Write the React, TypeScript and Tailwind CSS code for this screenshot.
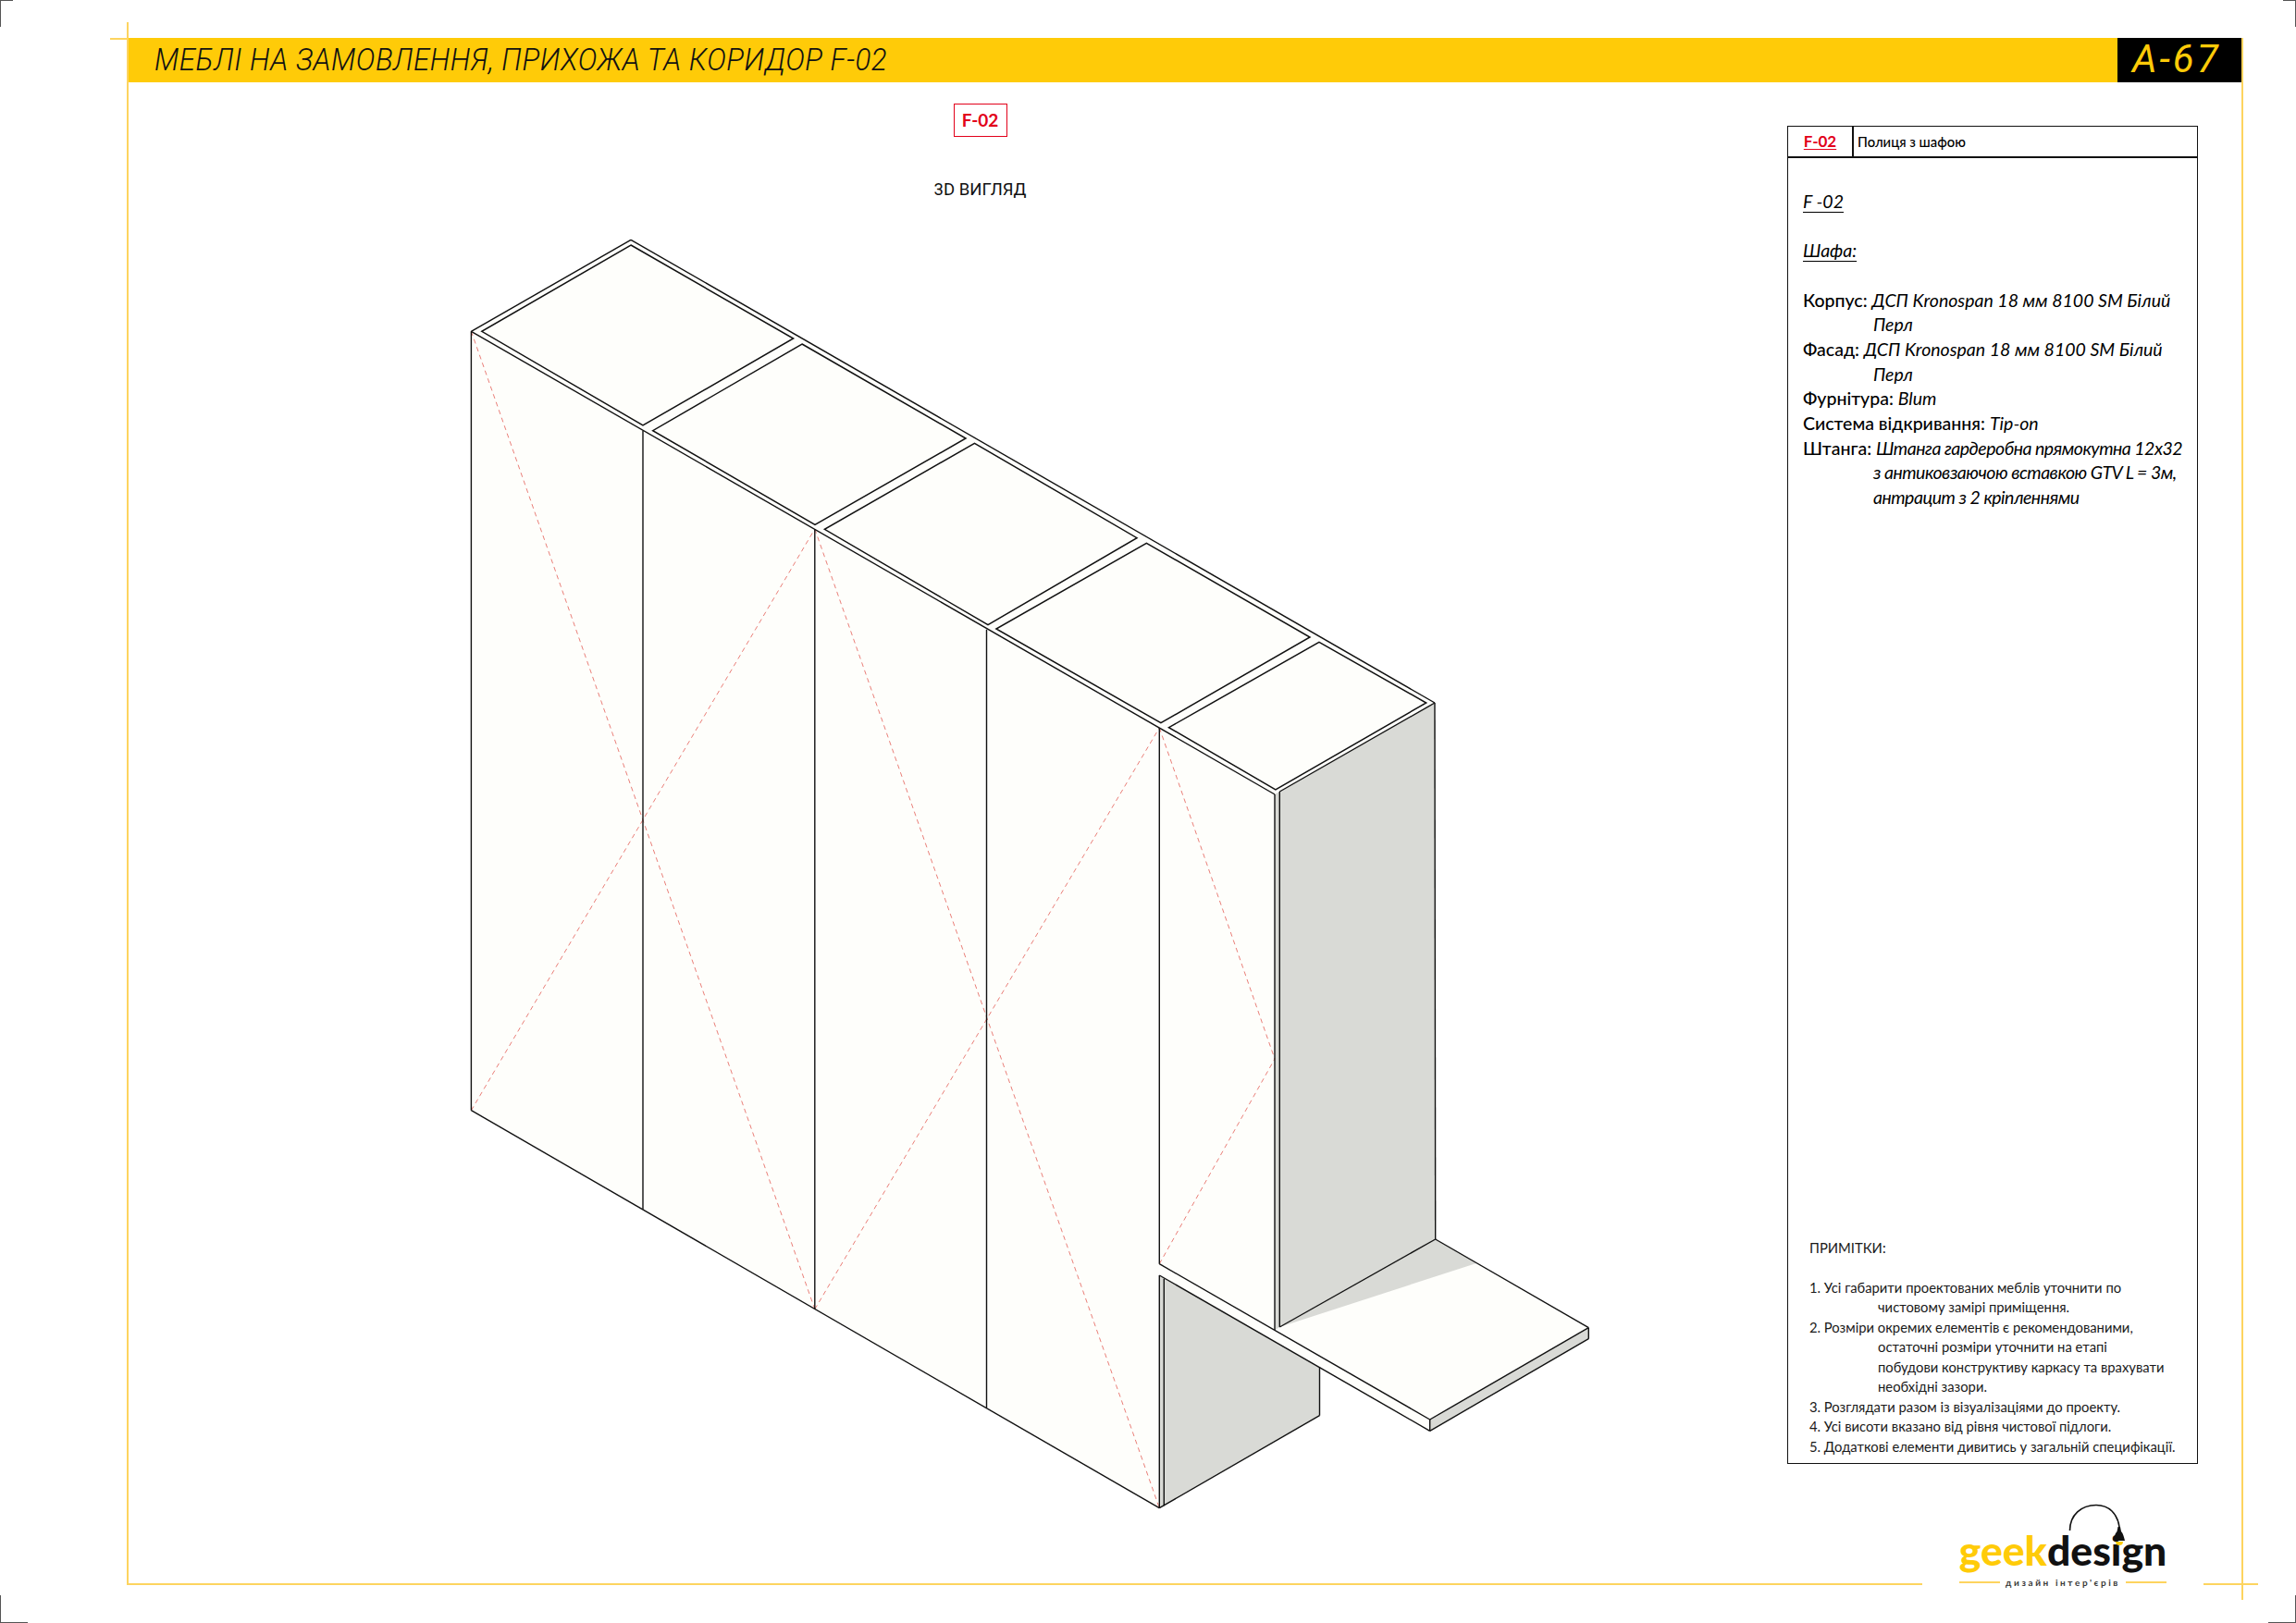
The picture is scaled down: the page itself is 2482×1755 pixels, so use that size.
const FUTURA = "font-['Lato','Noto_Sans',sans-serif]";

type P = [number, number];
const pts = (a: P[]) => a.map((p) => p.join(",")).join(" ");

const WHITE = "#fefefb";
const GREY = "#d9dad6";

const fills: { p: P[]; c: string }[] = [
  { p: [[682, 259.3], [1551, 760], [1378, 859], [509.4, 358.3]], c: WHITE },
  { p: [[509.4, 358.3], [1378, 859], [1378, 1438.3], [1253.3, 1366.7], [1253.3, 1630.7], [509.4, 1200.7]], c: WHITE },
  { p: [[1383.3, 856], [1551, 760], [1551.7, 1340], [1383.3, 1435]], c: GREY },
  { p: [[1378, 859], [1383.3, 856], [1383.3, 1435], [1378, 1438.3]], c: GREY },
  { p: [[1253.3, 1379], [1426.5, 1478.5], [1426.5, 1530.7], [1253.3, 1630.7]], c: GREY },
  { p: [[1379, 1438.3], [1551.7, 1340], [1717.3, 1435.7], [1545.7, 1535]], c: WHITE },
  { p: [[1383.3, 1435], [1551.7, 1340], [1596, 1366]], c: GREY },
  { p: [[1253.3, 1366.7], [1545.7, 1535], [1545.7, 1547.3], [1253.3, 1379]], c: WHITE },
  { p: [[1545.7, 1535], [1717.3, 1435.7], [1717.3, 1447.7], [1545.7, 1547.3]], c: GREY },
];

const topPanels: P[][] = [
  [[682, 265], [857.6, 366], [695, 460], [520.8, 358.3]],
  [[867, 372], [1044, 474], [881, 567.3], [705.7, 465.7]],
  [[1053.5, 479.3], [1229, 581.7], [1068, 675.7], [891.4, 572.3]],
  [[1239.4, 587.3], [1416, 689], [1254.9, 781.7], [1076.9, 680]],
  [[1426, 694.3], [1541.7, 760], [1378.9, 854], [1263.5, 786.7]],
];

const lines: [number, number, number, number][] = [
  [682, 259.3, 509.4, 358.3],
  [682, 259.3, 1551, 760],
  [509.4, 358.3, 1378, 859],
  [1551, 760, 1383.3, 856],
  [509.4, 358.3, 509.4, 1200.7],
  [695, 465.7, 695, 1307.7],
  [880.8, 572, 880.8, 1415.7],
  [1066.5, 680.7, 1066.5, 1522],
  [1253.3, 787, 1253.3, 1366.7],
  [1253.3, 1379, 1253.3, 1630.7],
  [1258.3, 1382.7, 1258.3, 1628.3],
  [509.4, 1200.7, 1253.3, 1630.7],
  [1253.3, 1630.7, 1426.5, 1530.7],
  [1426.5, 1478.5, 1426.5, 1530.7],
  [1378, 859, 1378, 1438.3],
  [1383.3, 856, 1383.3, 1435],
  [1551, 760, 1551.7, 1340],
  [1551.7, 1340, 1383.3, 1435],
  [1551.7, 1340, 1717.3, 1435.7],
  [1717.3, 1435.7, 1545.7, 1535],
  [1717.3, 1435.7, 1717.3, 1447.7],
  [1717.3, 1447.7, 1545.7, 1547.3],
  [1545.7, 1535, 1545.7, 1547.3],
  [1253.3, 1366.7, 1545.7, 1535],
  [1253.3, 1379, 1545.7, 1547.3],
];

const dashes: [number, number, number, number][] = [
  [509.4, 358.3, 880.8, 1415.7],
  [509.4, 1200.7, 880.8, 572],
  [880.8, 572, 1253.3, 1630.7],
  [880.8, 1415.7, 1253.3, 787],
  [1253.3, 787, 1378, 1145],
  [1253.3, 1366.7, 1378, 1145],
];

function Drawing() {
  return (
    <svg viewBox="500 250 1230 1390" className="block w-[1230px] h-[1390px] self-start ml-[313px] mt-[33px]" fill="none">
      {fills.map((f, i) => (
        <polygon key={i} points={pts(f.p)} fill={f.c} />
      ))}
      {dashes.map((d, i) => (
        <line key={i} x1={d[0]} y1={d[1]} x2={d[2]} y2={d[3]} stroke="#ea7f78" strokeWidth={1} strokeDasharray="5 4" />
      ))}
      {topPanels.map((p, i) => (
        <polygon key={i} points={pts(p)} stroke="#111" strokeWidth={1.5} strokeLinejoin="miter" />
      ))}
      {lines.map((l, i) => (
        <line key={i} x1={l[0]} y1={l[1]} x2={l[2]} y2={l[3]} stroke="#111" strokeWidth={1.4} />
      ))}
    </svg>
  );
}

function SpecRow({ label, lines: rows, tight }: { label: string; lines: string[]; tight?: boolean }) {
  const em = tight ? "tracking-[-0.5px]" : "";
  return (
    <>
      <div className="whitespace-nowrap">
        <span className="font-medium">{label}</span> <em className={em}>{rows[0]}</em>
      </div>
      {rows.slice(1).map((r) => (
        <div key={r} className="pl-[76px] whitespace-nowrap">
          <em className={em}>{r}</em>
        </div>
      ))}
    </>
  );
}

const notes: [string, boolean][] = [
  ["1. Усі габарити проектованих меблів уточнити по", false],
  ["чистовому замірі приміщення.", true],
  ["2. Розміри окремих елементів є рекомендованими,", false],
  ["остаточні розміри уточнити на етапі", true],
  ["побудови конструктиву каркасу та врахувати", true],
  ["необхідні зазори.", true],
  ["3. Розглядати разом із візуалізаціями до проекту.", false],
  ["4. Усі висоти вказано від рівня чистової підлоги.", false],
  ["5. Додаткові елементи дивитись у загальній специфікації.", false],
];

function Table() {
  return (
    <aside className={`w-[444px] h-[1447px] mt-[47px] mr-[47px] shrink-0 flex flex-col border-[1.5px] border-[#111] text-black ${FUTURA}`}>
      <header className="flex h-[34px] shrink-0 border-b-2 border-[#111]">
        <div className="w-[71px] shrink-0 flex items-center justify-center border-r-2 border-[#111] text-[17px] font-bold text-[#e2001a] underline underline-offset-2">
          F-02
        </div>
        <div className="flex items-center pl-[4px] text-[14.8px] font-medium">Полиця з шафою</div>
      </header>
      <div className="flex-1 flex flex-col justify-between">
        <div className="pt-[34px] pl-[16px] text-[19.5px] leading-[26.67px]">
          <div className="italic underline underline-offset-4">F -02</div>
          <div className="h-[26.67px]" />
          <div className="italic underline underline-offset-4">Шафа:</div>
          <div className="h-[26.67px]" />
          <SpecRow label="Корпус:" lines={["ДСП Kronospan 18 мм 8100 SM Білий", "Перл"]} />
          <SpecRow label="Фасад:" lines={["ДСП Kronospan 18 мм 8100 SM Білий", "Перл"]} />
          <SpecRow label="Фурнітура:" lines={["Blum"]} />
          <SpecRow label="Система відкривання:" lines={["Tip-on"]} />
          <SpecRow tight label="Штанга:" lines={["Штанга гардеробна прямокутна 12x32", "з антиковзаючою вставкою GTV L = 3м,", "антрацит з 2 кріпленнями"]} />
        </div>
        <div className="pb-[7px] pl-[23px] text-[14.8px] leading-[21.5px] text-[#1a1a1a]">
          <div>ПРИМІТКИ:</div>
          <div className="h-[21.5px]" />
          {notes.map(([t, indent]) => (
            <div key={t} className={indent ? "pl-[74px] whitespace-nowrap" : "whitespace-nowrap"}>
              {t}
            </div>
          ))}
        </div>
      </div>
    </aside>
  );
}

function Logo() {
  return (
    <div className="absolute left-[1939px] bottom-[-14px] w-[304px] h-[110px] bg-white flex flex-col items-center">
      <svg viewBox="0 0 80 48" className="absolute left-[157px] top-[9px] w-[80px] h-[48px]" fill="none">
        <path d="M2.5 30 C2.5 13 15 2.5 31 2.5 C45 2.5 54 12 56 26" stroke="#111" strokeWidth={1.6} />
        <path d="M54.5 26 L57 26 L58 31 C60 33 61 37 62 41 L49.5 41 C50.5 37 51.5 33 53.5 31 Z" fill="#111" />
        <path d="M52 42 L60 42 C60 45 58 46 56 46 C54 46 52 45 52 42 Z" fill="#ffcb08" />
      </svg>
      <div className="mt-[30px] flex text-[44.5px] leading-[59px] font-black font-['Lato',sans-serif]">
        <span className="text-[#ffcb08]">geek</span>
        <span className="text-[#111]">design</span>
      </div>
      <div className="flex items-center w-[224px] gap-[6px]">
        <span className="flex-1 h-[2px] bg-[#fdd45f]" />
        <span className="text-[10px] leading-[12px] font-bold tracking-[2.6px] text-[#3a3a3a] whitespace-nowrap font-['Lato',sans-serif]">дизайн інтер'єрів</span>
        <span className="flex-1 h-[2px] bg-[#fdd45f]" />
      </div>
    </div>
  );
}

function Marks() {
  const c = "absolute bg-[#555]";
  return (
    <>
      <span className={`${c} left-0 top-0 w-[14px] h-[1px]`} />
      <span className={`${c} left-0 top-0 w-[1px] h-[29px]`} />
      <span className={`${c} right-0 top-0 w-[14px] h-[1px]`} />
      <span className={`${c} right-0 top-0 w-[1px] h-[29px]`} />
      <span className={`${c} left-0 bottom-0 w-[30px] h-[1px]`} />
      <span className={`${c} left-0 bottom-0 w-[1px] h-[30px]`} />
      <span className={`${c} right-0 bottom-0 w-[30px] h-[1px]`} />
      <span className={`${c} right-0 bottom-0 w-[1px] h-[30px]`} />
    </>
  );
}

export default function App() {
  return (
    <div className="relative flow-root w-[2482px] h-[1755px] bg-white overflow-hidden">
      <Marks />
      <div className="relative ml-[137px] mt-[41px] w-[2288px] h-[1673px] border-l-2 border-r-2 border-b-2 border-[#fdd45f] flex flex-col">
        <span className="absolute left-[-20px] top-0 w-[20px] h-[2px] bg-[#fdd45f]" />
        <span className="absolute left-[-2px] top-[-17px] w-[2px] h-[17px] bg-[#fdd45f]" />
        <span className="absolute right-[-2px] bottom-[-18px] w-[2px] h-[18px] bg-[#fdd45f]" />
        <span className="absolute right-[-18px] bottom-[-2px] w-[18px] h-[2px] bg-[#fdd45f]" />
        <header className="flex h-[48px] shrink-0 bg-[#ffcb08]">
          <div className="flex-1 min-w-0 pl-[28px]">
            <h1 className="origin-left scale-x-[0.92] text-[34px] leading-[46px] italic font-light tracking-[0.6px] text-[#111] font-['Roboto',sans-serif] whitespace-nowrap">
              МЕБЛІ НА ЗАМОВЛЕННЯ, ПРИХОЖА ТА КОРИДОР F-02
            </h1>
          </div>
          <div className="w-[134px] bg-black text-[#ffcb08] pl-[16px] text-[42px] leading-[46px] italic font-normal tracking-[3px] font-['Roboto',sans-serif]">
            A-67
          </div>
        </header>
        <div className="flex flex-1 min-h-0">
          <main className="flex-1 flex flex-col items-center pl-[48px]">
            <div className={`mt-[23px] w-[58px] h-[36px] flex items-center justify-center border border-[#e2001a] text-[19px] font-bold text-[#e2001a] ${FUTURA}`}>
              F-02
            </div>
            <div className="mt-[45px] text-[18.5px] leading-[24px] font-normal text-[#111] font-['Roboto',sans-serif]">3D ВИГЛЯД</div>
            <Drawing />
          </main>
          <Table />
        </div>
        <Logo />
      </div>
    </div>
  );
}
